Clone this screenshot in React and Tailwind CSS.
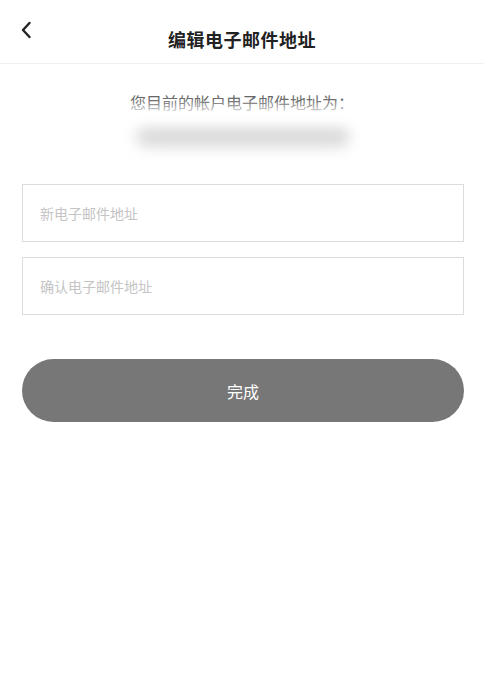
import React from 'react';

const font = { fontFamily: '"Noto Sans CJK SC", "Noto Sans", sans-serif' };

const Field = ({ placeholder }) => (
  <input
    className="w-full h-[58px] border border-[#dcdcdc] bg-white px-[17px] text-[14px] text-[#333] placeholder:text-[#c4c4c4] outline-none"
    placeholder={placeholder}
  />
);

export default function App() {
  return (
    <div className="w-[484px] h-[691px] bg-white" style={font}>
      <div className="relative h-[64px] border-b border-[#f0f0f0] flex items-center justify-center">
        <button className="absolute left-[16px] top-[18px] w-[20px] h-[24px] flex items-center justify-center">
          <svg width="12" height="18" viewBox="0 0 12 18" fill="none">
            <path d="M9.5 2 L3 9 L9.5 16" stroke="#222" strokeWidth="2.4" strokeLinecap="round" strokeLinejoin="round" />
          </svg>
        </button>
        <h1 className="mt-[16px] text-[18px] font-semibold text-[#222] tracking-[0.5px]">编辑电子邮件地址</h1>
      </div>

      <div className="relative flex flex-col items-center pt-[27px]">
        <p className="text-[16px] text-[#666] leading-[22px]">您目前的帐户电子邮件地址为：</p>
        <div className="relative mt-[8px] h-[28px] w-[240px]">
          <div className="absolute left-[14px] top-[6px] h-[20px] w-[214px] rounded-full bg-[#dadada] blur-[7px]" />
        </div>
        <div className="absolute left-[120px] top-[42px] h-[14px] w-[250px] bg-white/80 blur-[5px]" />
      </div>

      <div className="pl-[22px] pr-[20px] pt-[35px] flex flex-col gap-[15px]">
        <Field placeholder="新电子邮件地址" />
        <Field placeholder="确认电子邮件地址" />
      </div>

      <div className="pl-[22px] pr-[20px] pt-[44px]">
        <button className="w-full h-[63px] rounded-full bg-[#777777] text-white text-[16px]">完成</button>
      </div>
    </div>
  );
}
